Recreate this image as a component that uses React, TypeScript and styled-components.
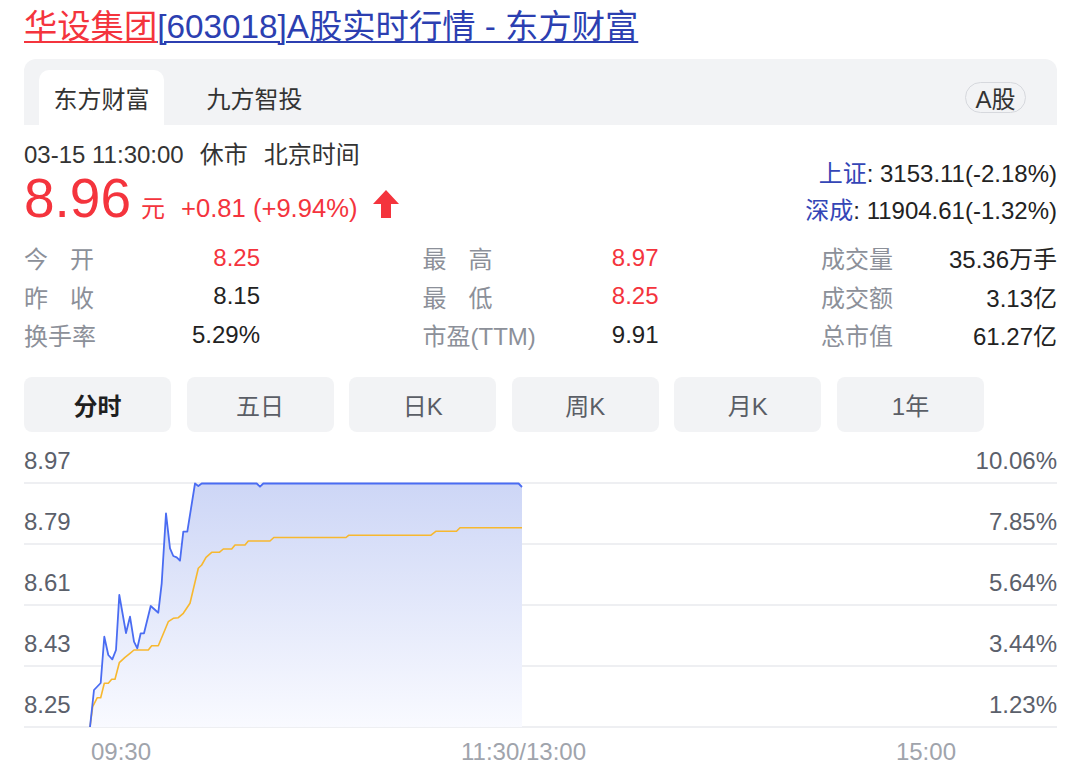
import React from "react";
import styled, { createGlobalStyle } from "styled-components";

const GlobalStyle = createGlobalStyle`
  body {
    margin: 0;
    background: #fff;
    font-family: "Liberation Sans", "Noto Sans CJK SC", sans-serif;
    color: #222;
  }
`;

const RED = "#f4343d";
const BLUE = "#2c3fb1";
const GRAY_BG = "#f2f3f5";

const Page = styled.div`
  width: 1080px;
  box-sizing: border-box;
  padding: 7px 23px 0 24px;
  font-size: 24px;
`;

const Title = styled.h1`
  margin: 0;
  font-size: 33.3px;
  line-height: 40px;
  font-weight: normal;
  white-space: nowrap;
`;

const TitleLink = styled.a<{ $red?: boolean }>`
  color: ${({ $red }) => ($red ? RED : BLUE)};
  text-decoration: underline;
  text-decoration-thickness: 2px;
  text-underline-offset: 3px;
`;

const TabBar = styled.div`
  margin-top: 12px;
  height: 66px;
  box-sizing: border-box;
  background: ${GRAY_BG};
  border-radius: 12px 12px 0 0;
  display: flex;
  align-items: flex-end;
  gap: 28px;
  padding: 0 31px 0 15px;
`;

const Tab = styled.div<{ $active?: boolean }>`
  height: 55px;
  padding: 0 14.5px;
  display: flex;
  align-items: center;
  color: #333;
  background: ${({ $active }) => ($active ? "#fff" : "transparent")};
  border-radius: 10px 10px 0 0;
`;

const Pill = styled.div`
  margin-left: auto;
  margin-bottom: 12px;
  height: 31px;
  box-sizing: border-box;
  padding: 0 9.5px;
  border: 1.5px solid #d6d8dd;
  border-radius: 16px;
  display: flex;
  align-items: center;
  color: #333;
`;

const Info = styled.div`
  margin-top: 15px;
  display: flex;
  justify-content: space-between;
`;

const LeftInfo = styled.div`
  display: flex;
  flex-direction: column;
`;

const DateRow = styled.div`
  display: flex;
  gap: 16px;
  line-height: 30px;
  color: #333;
`;

const PriceRow = styled.div`
  display: flex;
  align-items: baseline;
  color: ${RED};
`;

const Price = styled.span`
  font-size: 55px;
  line-height: 56px;
`;

const Unit = styled.span`
  margin-left: 10px;
`;

const Change = styled.span`
  margin-left: 16px;
  font-size: 25.6px;
`;

const UpArrow = styled.svg`
  margin-left: 16px;
  align-self: center;
  margin-top: 12px;
`;

const IndexList = styled.div`
  padding-top: 14.5px;
  text-align: right;
  line-height: 37px;
  color: #222;
`;

const IndexName = styled.span`
  color: #3446b6;
`;

const Stats = styled.div`
  margin-top: 10px;
  display: grid;
  grid-template-columns: repeat(3, 236px);
  justify-content: space-between;
`;

const StatCell = styled.div`
  height: 38.5px;
  display: flex;
  align-items: center;
  justify-content: space-between;
`;

const StatLabel = styled.span<{ $spread?: boolean }>`
  color: #8c9099;
  width: ${({ $spread }) => ($spread ? "70px" : "auto")};
  text-align: ${({ $spread }) => ($spread ? "justify" : "left")};
  text-align-last: ${({ $spread }) => ($spread ? "justify" : "auto")};
`;

const StatValue = styled.span<{ $red?: boolean }>`
  color: ${({ $red }) => ($red ? RED : "#222")};
`;

const Periods = styled.div`
  margin-top: 22.5px;
  display: grid;
  grid-template-columns: repeat(6, 147px);
  column-gap: 15.6px;
`;

const PeriodButton = styled.div<{ $active?: boolean }>`
  height: 55px;
  border-radius: 8px;
  background: ${GRAY_BG};
  display: flex;
  align-items: center;
  justify-content: center;
  color: ${({ $active }) => ($active ? "#1f1f1f" : "#5a5e66")};
  font-weight: ${({ $active }) => ($active ? "bold" : "normal")};
`;

const Chart = styled.div`
  position: relative;
`;

const GridRow = styled.div<{ $first?: boolean }>`
  height: ${({ $first }) => ($first ? "52px" : "61px")};
  box-sizing: border-box;
  border-bottom: 2px solid #eeeff2;
  padding-bottom: 8px;
  display: flex;
  align-items: flex-end;
  justify-content: space-between;
  line-height: 26px;
  color: #5b606b;
`;

const ChartLines = styled.svg`
  position: absolute;
  left: 0;
  top: 0;
  pointer-events: none;
`;

const TimeAxis = styled.div`
  margin-top: 9px;
  padding: 0 101px 0 67px;
  display: flex;
  justify-content: space-between;
  line-height: 30px;
  color: #a0a4ac;
`;

const stats = [
  { label: "今开", value: "8.25", red: true, spread: true },
  { label: "最高", value: "8.97", red: true, spread: true },
  { label: "成交量", value: "35.36万手" },
  { label: "昨收", value: "8.15", spread: true },
  { label: "最低", value: "8.25", red: true, spread: true },
  { label: "成交额", value: "3.13亿" },
  { label: "换手率", value: "5.29%" },
  { label: "市盈(TTM)", value: "9.91" },
  { label: "总市值", value: "61.27亿" },
];

const periods = ["分时", "五日", "日K", "周K", "月K", "1年"];

const axis = [
  ["8.97", "10.06%"],
  ["8.79", "7.85%"],
  ["8.61", "5.64%"],
  ["8.43", "3.44%"],
  ["8.25", "1.23%"],
];

// page coordinates of the price line and the average line
const priceLine: [number, number][] = [
  [90, 727], [94, 690], [100.7, 683], [104.3, 636.7], [108.3, 655],
  [112.3, 659.3], [116, 650], [119.3, 595], [126, 633], [130, 616.7],
  [134, 641.7], [137.3, 648.3], [140.7, 633.3], [144, 633.3], [150.7, 606],
  [158.3, 612.7], [161.7, 583.3], [166, 513.3], [170, 548.3], [173.3, 556],
  [176.7, 557.3], [180, 560.7], [183.3, 531.7], [187.3, 531.7], [195, 483.5],
  [198.3, 486], [201.7, 483.5], [256.7, 483.5], [260, 486.7], [263.3, 483.5],
  [518.6, 483.5], [522, 487],
];

const avgLine: [number, number][] = [
  [90, 727], [92.7, 706.7], [97.3, 697.7], [100.7, 697.7], [104.3, 683.3],
  [108.3, 683.3], [111.7, 679.3], [115, 679.3], [119.3, 662.7], [125, 657.3],
  [130, 653.3], [134, 650], [148.3, 650], [151.7, 645.7], [158.3, 645.7],
  [168.3, 621.7], [173.3, 618.3], [178.3, 617.7], [183.3, 613.3], [190, 603.3],
  [198.3, 568.3], [201.7, 565], [206, 557.3], [211.7, 552.3], [219.3, 552.3],
  [223.3, 549], [231.7, 549], [235, 545], [245, 545], [248.3, 541],
  [270, 541], [273.8, 537.5], [346, 537.5], [348.6, 535.3], [430.7, 535.3],
  [435.8, 531.3], [456.5, 531.3], [460, 527.7], [522, 527.7],
];

const OX = 24;
const OY = 432;
const toPoints = (pts: [number, number][]) =>
  pts.map(([x, y]) => `${(x - OX).toFixed(1)},${(y - OY).toFixed(1)}`).join(" ");

const App = () => {
  const areaPoints = toPoints([...priceLine, [522, 727], [90, 727]]);

  return (
    <>
      <GlobalStyle />
      <Page>
        <Title>
          <TitleLink $red href="#">华设集团</TitleLink>
          <TitleLink href="#">[603018]A股实时行情 - 东方财富</TitleLink>
        </Title>

        <TabBar>
          <Tab $active>东方财富</Tab>
          <Tab>九方智投</Tab>
          <Pill>A股</Pill>
        </TabBar>

        <Info>
          <LeftInfo>
            <DateRow>
              <span>03-15 11:30:00</span>
              <span>休市</span>
              <span>北京时间</span>
            </DateRow>
            <PriceRow>
              <Price>8.96</Price>
              <Unit>元</Unit>
              <Change>+0.81 (+9.94%)</Change>
              <UpArrow width="26" height="28" viewBox="0 0 26 28">
                <polygon
                  points="13,0 26,14 18,14 18,28 8,28 8,14 0,14"
                  fill={RED}
                />
              </UpArrow>
            </PriceRow>
          </LeftInfo>
          <IndexList>
            <div>
              <IndexName>上证</IndexName>: 3153.11(-2.18%)
            </div>
            <div>
              <IndexName>深成</IndexName>: 11904.61(-1.32%)
            </div>
          </IndexList>
        </Info>

        <Stats>
          {stats.map((item) => (
            <StatCell key={item.label}>
              <StatLabel $spread={item.spread}>{item.label}</StatLabel>
              <StatValue $red={item.red}>{item.value}</StatValue>
            </StatCell>
          ))}
        </Stats>

        <Periods>
          {periods.map((period, index) => (
            <PeriodButton key={period} $active={index === 0}>
              {period}
            </PeriodButton>
          ))}
        </Periods>

        <Chart>
          {axis.map(([price, percent], index) => (
            <GridRow key={price} $first={index === 0}>
              <span>{price}</span>
              <span>{percent}</span>
            </GridRow>
          ))}
          <ChartLines width="1033" height="296" viewBox="0 0 1033 296">
            <defs>
              <linearGradient
                id="area"
                gradientUnits="userSpaceOnUse"
                x1="0"
                y1={483 - OY}
                x2="0"
                y2={727 - OY}
              >
                <stop offset="0" stopColor="#cdd6f6" />
                <stop offset="1" stopColor="#f9faff" />
              </linearGradient>
            </defs>
            <polygon points={areaPoints} fill="url(#area)" />
            <polyline
              points={toPoints(avgLine)}
              fill="none"
              stroke="#f7b82f"
              strokeWidth="1.6"
              strokeLinejoin="round"
            />
            <polyline
              points={toPoints(priceLine)}
              fill="none"
              stroke="#4a6cf2"
              strokeWidth="1.8"
              strokeLinejoin="round"
            />
          </ChartLines>
        </Chart>

        <TimeAxis>
          <span>09:30</span>
          <span>11:30/13:00</span>
          <span>15:00</span>
        </TimeAxis>
      </Page>
    </>
  );
};

export default App;
